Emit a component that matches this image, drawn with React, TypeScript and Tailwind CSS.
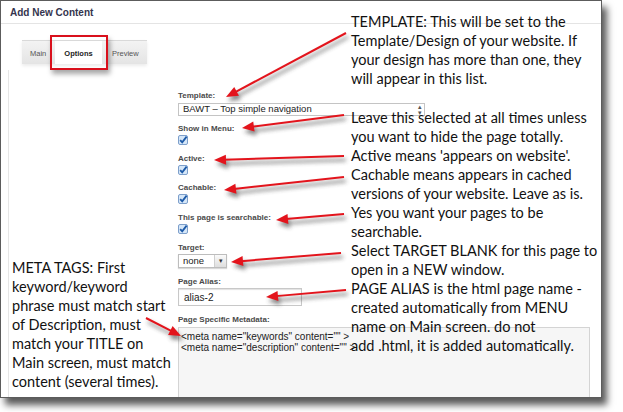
import React from "react"

const ui = { fontFamily: '"Liberation Sans", Arial, sans-serif' }
const note = { fontFamily: 'Lato, "Noto Sans", sans-serif' }

const arrows = [
  { from: [346, 33], to: [226, 97] },
  { from: [344, 115], to: [242, 128] },
  { from: [344, 156], to: [214, 160] },
  { from: [344, 177], to: [224, 190] },
  { from: [344, 214], to: [276, 220] },
  { from: [341, 253], to: [231, 262] },
  { from: [346, 290], to: [266, 297] },
  { from: [146, 318], to: [181, 336] },
]

const templateNote = [
  "TEMPLATE: This will be set to the",
  "Template/Design of your website. If",
  "your design has more than one, they",
  "will appear in this list.",
]

const optionNotes = [
  "Leave this selected at all times unless",
  "you want to hide the page totally.",
  "Active means 'appears on website'.",
  "Cachable means appears in cached",
  "versions of your website. Leave as is.",
  "Yes you want your pages to be",
  "searchable.",
  "Select TARGET BLANK for this page to",
  "open in a NEW window.",
  "PAGE ALIAS is the html page name -",
  "created automatically from MENU",
  "name on Main screen. do not",
  "add .html, it is added automatically.",
]

const metaNote = [
  "META TAGS: First",
  "keyword/keyword",
  "phrase must match start",
  "of Description, must",
  "match your TITLE on",
  "Main screen, must match",
  "content (several times).",
]

function Arrow({ from, to }: { from: number[]; to: number[] }) {
  const [x1, y1] = from
  const [x2, y2] = to
  const dx = x2 - x1
  const dy = y2 - y1
  const len = Math.hypot(dx, dy)
  const ux = dx / len
  const uy = dy / len
  const bx = x2 - ux * 12
  const by = y2 - uy * 12
  const head = `${x2},${y2} ${bx - uy * 5},${by + ux * 5} ${bx + uy * 5},${by - ux * 5}`
  return (
    <g>
      <g filter="url(#arrowShadow)" opacity="0.6" transform="translate(2 4)">
        <line x1={x1} y1={y1} x2={bx} y2={by} stroke="#333" strokeWidth="2.5" />
        <polygon points={head} fill="#333" />
      </g>
      <line x1={x1} y1={y1} x2={bx + ux * 2} y2={by + uy * 2} stroke="#e3141c" strokeWidth="2" />
      <polygon points={head} fill="#e3141c" />
    </g>
  )
}

function CheckBox() {
  return (
    <svg width="10" height="10" viewBox="0 0 10 10" className="block">
      <rect x="0.5" y="0.5" width="9" height="9" rx="1.5" fill="#d6e7f8" stroke="#7d9fcb" />
      <path d="M2.2 5.2 L4.2 7.4 L8.6 1.6" fill="none" stroke="#1d5aa8" strokeWidth="1.8" />
    </svg>
  )
}

function Label({ children, className = "" }: { children: React.ReactNode; className?: string }) {
  return <div className={`text-[8px] leading-[10px] font-bold text-[#4a4a4a] ${className}`}>{children}</div>
}

export default function App() {
  return (
    <div className="relative w-[623px] h-[412px] bg-white overflow-hidden" style={ui}>
      {/* screenshot window */}
      <div className="w-[602px] h-[398px] border border-[#5c5c5c] bg-white shadow-[5px_7px_7px_rgba(0,0,0,0.65)] overflow-hidden flex flex-col">
        <div className="h-[23px] shrink-0 border-b border-[#e4e4e4] pl-[9px] flex items-center text-[10px] font-bold text-[#34344e]">
          Add New Content
        </div>

        {/* tabs */}
        <div className="pt-[16px] pl-[21px] shrink-0">
          <div className="relative flex h-[24px] w-[125px] border-t border-[#d9d9d9] bg-gradient-to-b from-[#f3f3f3] to-[#e4e4e4] text-[7.5px] text-[#555] shadow-[0_2px_3px_rgba(0,0,0,0.08)]">
            <div className="w-[33px] flex items-center pt-[3px] pl-[8px]">Main</div>
            <div className="w-[47px] flex items-center justify-center pt-[3px] bg-white font-bold text-[#222]">Options</div>
            <div className="flex-1 flex items-center pt-[3px] pl-[10px]">Preview</div>
            <div className="absolute left-[28px] -top-[6px] w-[58px] h-[35px] border-2 border-[#d9101c] shadow-[2px_4px_5px_rgba(0,0,0,0.35)]" />
          </div>
        </div>

        {/* panel */}
        <div className="mt-[6px] ml-[7px] flex-1 border-l border-[#e6e6e6] pl-[169px] pt-[21px]">
          <Label>Template:</Label>
          <div className="mt-[2px] w-[247px] h-[13px] border border-[#c4c4c4] bg-white flex items-center justify-between pl-[4px] pr-[2px] text-[9.5px] text-[#222]">
            <span>BAWT – Top simple navigation</span>
            <span className="text-[7px] leading-[6px] text-[#555] flex flex-col">
              <span>▴</span>
              <span>▾</span>
            </span>
          </div>

          <Label className="mt-[8px]">Show in Menu:</Label>
          <div className="mt-[1px]"><CheckBox /></div>

          <Label className="mt-[9px]">Active:</Label>
          <div className="mt-[1px]"><CheckBox /></div>

          <Label className="mt-[8px]">Cachable:</Label>
          <div className="mt-[1px]"><CheckBox /></div>

          <Label className="mt-[9px]">This page is searchable:</Label>
          <div className="mt-[1px]"><CheckBox /></div>

          <Label className="mt-[9px]">Target:</Label>
          <div className="mt-[1px] w-[49px] h-[14px] border border-[#bdbdbd] flex text-[9.5px] text-[#222] shadow-[0_1px_1px_rgba(0,0,0,0.15)]">
            <span className="flex-1 flex items-center pl-[4px] bg-white">none</span>
            <span className="w-[12px] border-l border-[#cfcfcf] bg-gradient-to-b from-[#fafafa] to-[#dedede] flex items-center justify-center text-[7px] text-[#333]">▾</span>
          </div>

          <Label className="mt-[9px]">Page Alias:</Label>
          <div className="mt-[1px] w-[124px] h-[18px] border border-[#c8c8c8] bg-white flex items-center pl-[5px] text-[10px] text-[#222] shadow-[inset_0_1px_1px_rgba(0,0,0,0.12)]">
            alias-2
          </div>

          <Label className="mt-[9px]">Page Specific Metadata:</Label>
          <div className="mt-[2px] w-[412px] h-[80px] border border-[#d4d4d4] bg-[#f6f6f6] pl-[2px] pt-[3px] text-[10px] leading-[11px] text-[#222]">
            <div>{'<meta name="keywords" content="" >'}</div>
            <div>{'<meta name="description" content="" >'}</div>
          </div>
        </div>
      </div>

      {/* annotations */}
      <div className="absolute left-[351px] top-[12px] text-[14.5px] leading-[19px] text-[#111] whitespace-nowrap" style={note}>
        {templateNote.map((l) => (
          <div key={l}>{l}</div>
        ))}
        <div className="mt-[20px]">
          {optionNotes.map((l) => (
            <div key={l}>{l}</div>
          ))}
        </div>
      </div>

      <div className="absolute left-[12px] top-[258px] text-[14.5px] leading-[19px] text-[#111] whitespace-nowrap" style={note}>
        {metaNote.map((l) => (
          <div key={l}>{l}</div>
        ))}
      </div>

      <svg className="absolute left-0 top-0 pointer-events-none" width="623" height="412">
        <defs>
          <filter id="arrowShadow" x="-20%" y="-50%" width="140%" height="200%">
            <feGaussianBlur stdDeviation="2" />
          </filter>
        </defs>
        {arrows.map((a, i) => (
          <Arrow key={i} from={a.from} to={a.to} />
        ))}
      </svg>
    </div>
  )
}
